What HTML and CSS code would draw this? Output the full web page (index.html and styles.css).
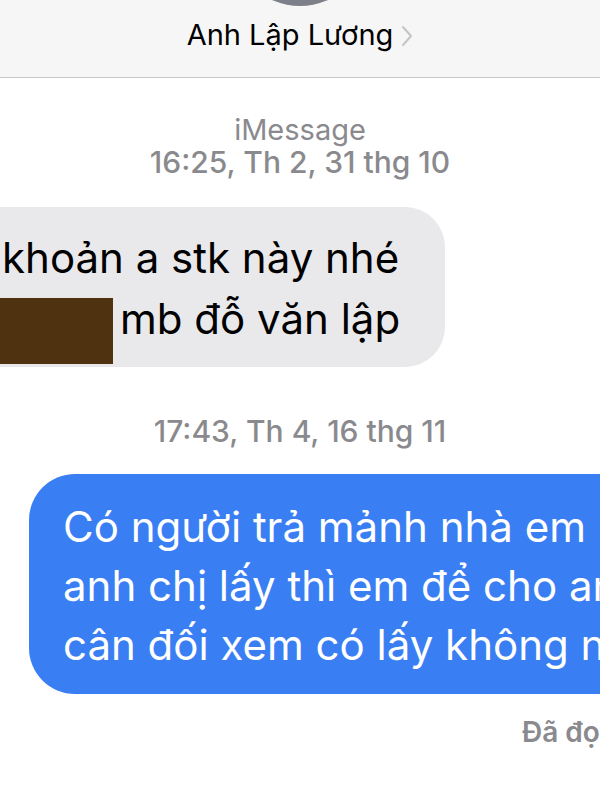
FILE: index.html
```html
<!DOCTYPE html>
<html lang="vi">
<head>
  <meta charset="UTF-8">
  <title>Anh Lập Lương</title>
  <meta name="viewport" content="width=device-width, initial-scale=1.0">
  <link rel="stylesheet" href="styles.css">
</head>
<body>
  <div class="header">
    <div class="avatar"></div>
    <div class="contact">
      <span class="name">Anh Lập Lương</span>
      <svg class="chevron" width="12" height="22" viewBox="0 0 12 22">
        <path d="M2 2l8 9-8 9" fill="none" stroke="#c4c4c7" stroke-width="2" stroke-linecap="round" stroke-linejoin="round"/>
      </svg>
    </div>
  </div>

  <div class="thread">
    <div class="stamp">
      <div>iMessage</div>
      <div class="time">16:25, Th 2, 31 thg 10</div>
    </div>

    <div class="bubble received">
      <div class="line">khoản a stk này nhé</div>
      <div class="line"><span class="redact"></span>mb đỗ văn lập</div>
    </div>

    <div class="stamp second">
      <div class="time">17:43, Th 4, 16 thg 11</div>
    </div>

    <div class="bubble sent">
      <div class="line">Có người trả mảnh nhà em rồi</div>
      <div class="line">anh chị lấy thì em để cho anh</div>
      <div class="line">cân đối xem có lấy không nhé</div>
    </div>

    <div class="receipt">Đã đọc</div>
  </div>
</body>
</html>
```

FILE: styles.css
```css
:root {
  --grey-text: #8a8a8e;
  --bubble-grey: #e9e9eb;
  --bubble-blue: #3a7ef3;
}

body {
  margin: 0;
  width: 600px;
  height: 800px;
  overflow: hidden;
  background: #fff;
  font-family: Inter, 'Noto Sans', sans-serif;
  color: #000;
}

.header {
  height: 77px;
  background: #f6f6f6;
  border-bottom: 1px solid #c8c8cc;
  display: flex;
  flex-direction: column;
  align-items: center;
  overflow: hidden;
}

.avatar {
  width: 136px;
  height: 136px;
  border-radius: 50%;
  background: #7e8089;
  margin-top: -130px;
  flex-shrink: 0;
}

.contact {
  display: flex;
  align-items: center;
  gap: 8px;
  margin-top: 11px;
  line-height: 36px;
}

.name {
  font-size: 29px;
}

.chevron {
  margin-top: 2px;
}

.thread {
  display: flex;
  flex-direction: column;
}

.stamp {
  text-align: center;
  color: var(--grey-text);
  font-size: 29px;
  line-height: 33px;
  margin-top: 35px;
}

.stamp .time {
  font-size: 30px;
  font-weight: 500;
}

.stamp.second {
  margin-top: 48px;
}

.bubble {
  font-size: 42px;
  white-space: nowrap;
}

.received {
  align-self: flex-start;
  background: var(--bubble-grey);
  border-radius: 40px;
  line-height: 61px;
  box-sizing: border-box;
  width: 600px;
  margin-left: -155px;
  margin-top: 28px;
  padding: 20px 0 18px 157px;
}

.redact {
  display: inline-block;
  vertical-align: top;
  width: 120px;
  height: 66px;
  margin: 10px 7px -15px -9px;
  background: #4f3310;
}

.sent {
  align-self: flex-start;
  background: var(--bubble-blue);
  color: #fff;
  border-radius: 46px;
  line-height: 59px;
  width: 800px;
  margin-left: 29px;
  margin-top: 26px;
  padding: 23px 0 20px 34px;
}

.receipt {
  align-self: flex-start;
  margin-left: 522px;
  margin-top: 21px;
  font-size: 28px;
  line-height: 34px;
  font-weight: 600;
  color: var(--grey-text);
  white-space: nowrap;
}
```
